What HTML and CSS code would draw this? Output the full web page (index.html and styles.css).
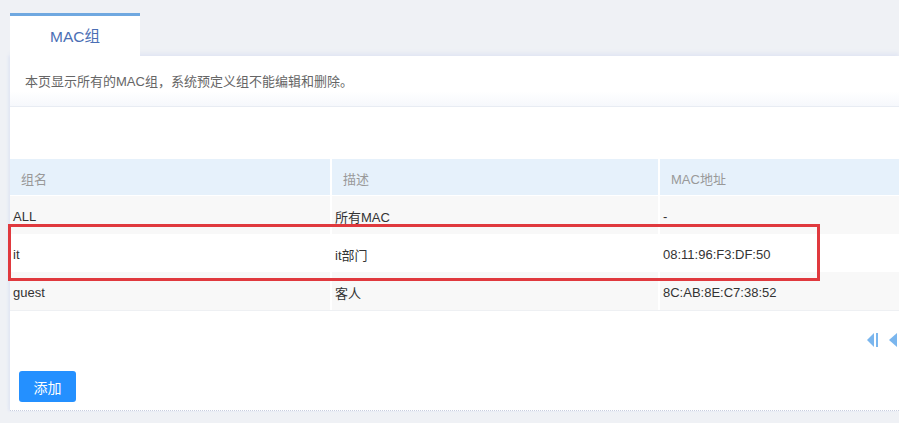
FILE: index.html
```html
<!DOCTYPE html>
<html lang="zh-CN">
<head>
<meta charset="utf-8">
<title>MAC组</title>
<link rel="stylesheet" href="styles.css">
</head>
<body>
<div class="page">
  <div class="tabs">
    <div class="tab">MAC组</div>
  </div>
  <div class="card">
    <div class="desc">本页显示所有的MAC组，系统预定义组不能编辑和删除。</div>
    <div class="spacer"></div>
    <div class="table">
      <div class="row head">
        <div class="cell">组名</div>
        <div class="cell">描述</div>
        <div class="cell">MAC地址</div>
      </div>
      <div class="row odd">
        <div class="cell">ALL</div>
        <div class="cell">所有MAC</div>
        <div class="cell">-</div>
      </div>
      <div class="row">
        <div class="cell">it</div>
        <div class="cell">it部门</div>
        <div class="cell">08:11:96:F3:DF:50</div>
      </div>
      <div class="row odd">
        <div class="cell">guest</div>
        <div class="cell">客人</div>
        <div class="cell">8C:AB:8E:C7:38:52</div>
      </div>
    </div>
    <div class="pager">
      <svg class="pg" width="14" height="16" viewBox="0 0 14 16"><path d="M8 1 L1 8 L8 15 Z" fill="#7ab6ee"/><rect x="10" y="1" width="2" height="14" fill="#7ab6ee"/></svg>
      <svg class="pg" width="12" height="16" viewBox="0 0 12 16"><path d="M10 1 L2 8 L10 15 Z" fill="#7ab6ee"/></svg>
    </div>
    <div class="actions">
      <button class="btn">添加</button>
    </div>
  </div>
  <div class="mark"></div>
</div>
</body>
</html>
```
FILE: styles.css
```css
html, body {
  margin: 0;
  padding: 0;
  background: #eff1f5;
  font-family: "Liberation Sans", "Noto Sans CJK SC", sans-serif;
  font-size: 13px;
  color: #333;
  overflow: hidden;
}
.page {
  position: relative;
  padding: 13px 0 0 10px;
  height: 410px;
}
.tabs {
  display: flex;
}
.tab {
  width: 130px;
  height: 40px;
  border-top: 3px solid #6fa8e0;
  background: #fff;
  color: #4b6fb5;
  font-size: 15.5px;
  line-height: 42px;
  text-align: center;
}
.card {
  width: 889px;
  overflow: hidden;
  background: #fff;
  box-shadow: 0 -3px 4px #e2e7f3, -2px 0 2px #e4e8f4;
  border-bottom: 1px dotted #c8cede;
}
.desc {
  height: 50px;
  line-height: 51px;
  padding-left: 15px;
  color: #666;
  background: linear-gradient(#ffffff 70%, #f6f8fc);
  border-bottom: 1px solid #e8ecf3;
}
.spacer {
  height: 52px;
}
.table {
  display: flex;
  flex-direction: column;
  border-bottom: 1px solid #eef0f3;
}
.row {
  display: grid;
  grid-template-columns: 320px 326px 1fr;
  column-gap: 2px;
  height: 38px;
}
.row.head {
  height: 36px;
  margin-bottom: 1px;
}
.row.head .cell {
  background: #e6f1fb;
  color: #999;
  padding-left: 11px;
}
.cell {
  display: flex;
  align-items: center;
  padding-left: 3px;
  padding-top: 2px;
  color: #333;
}
.row.odd .cell {
  background: #f8f8f8;
}
.pager {
  display: flex;
  gap: 7px;
  padding: 21px 0 0 856px;
  height: 16px;
}
.actions {
  padding: 23px 0 8px 9px;
}
.btn {
  width: 57px;
  height: 31px;
  border: none;
  border-radius: 3px;
  background: #2490ff;
  color: #fff;
  font-family: "Noto Sans CJK SC", sans-serif;
  font-size: 14px;
  padding: 0;
}
.mark {
  position: absolute;
  left: 8px;
  top: 224px;
  width: 806px;
  height: 51px;
  border: 3px solid #e0393e;
}
```
